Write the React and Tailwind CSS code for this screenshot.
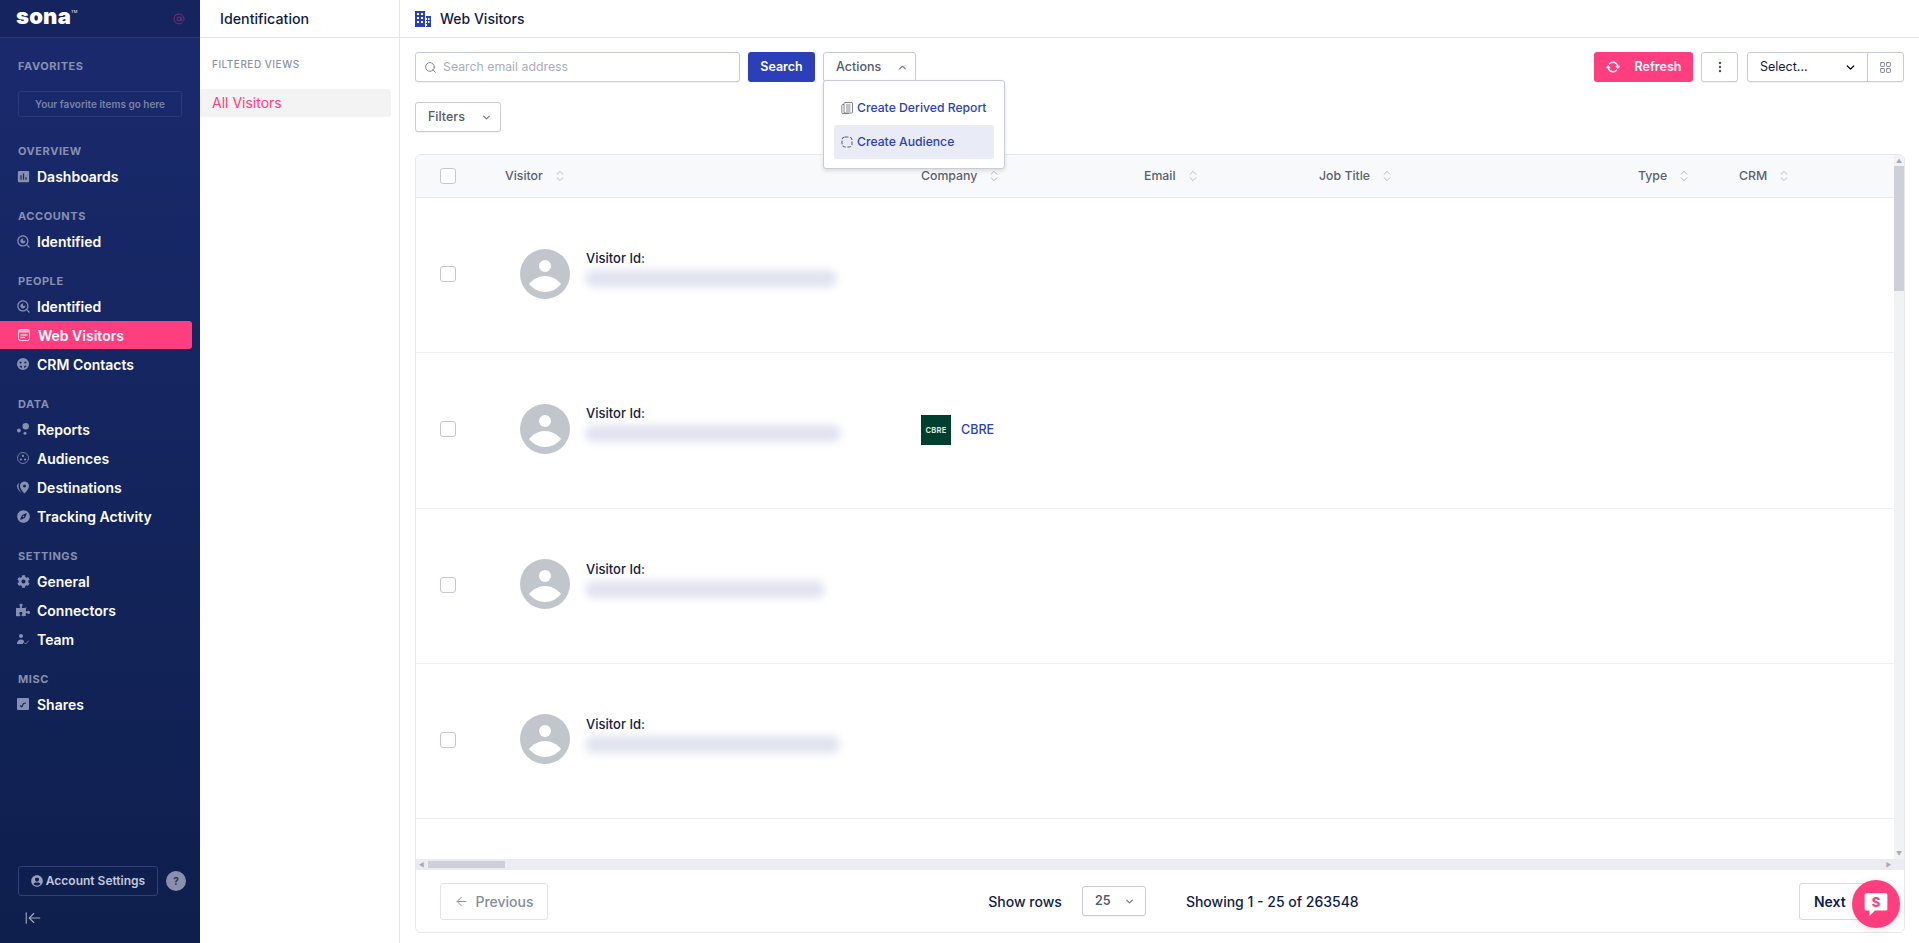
import React from 'react';
import { Search, ChevronDown, ChevronUp, ChevronsUpDown, ArrowLeft, ArrowLeftToLine, LayoutGrid, AtSign, EllipsisVertical } from 'lucide-react';
import { BsArrowRepeat } from 'react-icons/bs';
import { FaCog, FaPuzzlePiece, FaCompass, FaUserCircle } from 'react-icons/fa';
import { MdAssessment } from 'react-icons/md';
import { RiSearchEyeLine } from 'react-icons/ri';

const FONT = { fontFamily: 'Inter, "Noto Sans", sans-serif' };

// sidebar glyphs the packages don't have
const WebIcon = () => (
  <svg viewBox="0 0 12 12" className="w-[12px] h-[12px]">
    <rect x="0.5" y="0.5" width="11" height="11" rx="1.8" fill="#ff3e7f" stroke="#ffd5e4" />
    <rect x="1" y="1" width="10" height="2.6" fill="#ffb3cd" />
    <path d="M2.5 6h7M2.5 8.4h4.5" stroke="#fff" strokeWidth="1" />
  </svg>
);
const CrmIcon = () => (
  <svg viewBox="0 0 12 12" className="w-[12px] h-[12px]" fill="currentColor">
    <path fillRule="evenodd" d="M6 0a6 6 0 1 1 0 12A6 6 0 0 1 6 0ZM3.600 3.400a1.100 1.100 0 1 0 0 2.200 1.100 1.100 0 0 0 0-2.200Zm4.800 0a1.100 1.100 0 1 0 0 2.200 1.100 1.100 0 0 0 0-2.200ZM2.400 7.800c.5 1.300 1.300 2 2.300 2.400l.2-2.200c-.8-.4-1.600-.4-2.500-.2Zm4.700.2.200 2.200c1-.4 1.800-1.100 2.300-2.400-.9-.2-1.700-.2-2.500.2Z" />
  </svg>
);
const ReportsIcon = () => (
  <svg viewBox="0 0 12 12" className="w-[12px] h-[12px]" fill="currentColor">
    <circle cx="8.7" cy="3.3" r="3.2" /><circle cx="1.9" cy="7.500" r="1.900" /><circle cx="8" cy="10.200" r="1.500" />
  </svg>
);
const AudiencesIcon = () => (
  <svg viewBox="0 0 12 12" className="w-[12px] h-[12px]" fill="currentColor">
    <circle cx="6" cy="6" r="5.5" fill="none" stroke="currentColor" strokeWidth="0.8" />
    <circle cx="6" cy="3.9" r="1.1" /><circle cx="3.9" cy="7.5" r="1.1" /><circle cx="8.1" cy="7.5" r="1.1" />
  </svg>
);
const PinIcon = () => (
  <svg viewBox="0 0 12 12" className="w-[13px] h-[13px]" fill="currentColor">
    <path fillRule="evenodd" d="M7.5 0A4.5 4.5 0 0 1 12 4.5C12 7.5 7.5 12 7.5 12S3 7.500 3 4.500A4.5 4.5 0 0 1 7.500 0Zm0 3a1.500 1.500 0 1 0 0 3 1.500 1.500 0 0 0 0-3Z" />
    <path d="M2.600 1.300C1 2.200 0 3.300 0 5c0 2 2.500 5 4.600 7C3.200 9.800 1.500 7.300 1.500 5c0-1.500.4-2.600 1.100-3.700Z" />
  </svg>
);
const TeamIcon = () => (
  <svg viewBox="0 0 12 12" className="w-[12px] h-[12px]" fill="currentColor">
    <circle cx="4" cy="3" r="2" />
    <path d="M0 11c0-3 1.600-4.500 4-4.500S7 7.500 7 9l-1.500 2H0Z" />
    <path d="m7 9.500 1.500 1.500L12 7.500" fill="none" stroke="currentColor" strokeWidth="0.9" />
  </svg>
);
const SharesIcon = () => (
  <svg viewBox="0 0 12 12" className="w-[12px] h-[12px]">
    <rect width="12" height="12" rx="1" fill="currentColor" />
    <path d="m3 7.500 1.800 1.300L6.500 5.500 9 5" fill="none" stroke="#14245c" strokeWidth="1.200" />
  </svg>
);
const BuildingIcon = () => (
  <svg viewBox="0 0 16 16" className="w-[16px] h-[16px] text-[#2b3fb8]" fill="currentColor">
    <path fillRule="evenodd" d="M0 0h10v16H0V0Zm2 2v2h2V2H2Zm4 0v2h2V2H6ZM2 6v2h2V6H2Zm4 0v2h2V6H6Zm-4 4v2h2v-2H2Zm4 0v2h2v-2H6Z" />
    <path fillRule="evenodd" d="M11 5h5v11h-5v-1h1v-2h-1v-1h1v-2h-1V9h1V7h-1V5Zm2 2v2h1.500V7H13Zm0 3v2h1.500v-2H13Z" />
  </svg>
);
const CopyListIcon = () => (
  <svg viewBox="0 0 12 12" className="w-[12px] h-[12px] text-[#5f6675]" fill="none" stroke="currentColor" strokeWidth="0.8">
    <rect x="3" y="0.500" width="8.500" height="10.500" rx="1" />
    <path d="M3 2.500H1.800a1 1 0 0 0-1 1v7a1 1 0 0 0 1 1H8" />
    <path d="M5 3h4.500M5 5h4.500M5 7h4.500M5 9h4.500" />
  </svg>
);
const DashedCircleIcon = () => (
  <svg viewBox="0 0 12 12" className="w-[12px] h-[12px] text-[#5f6675]" fill="none" stroke="currentColor" strokeWidth="1.100">
    <rect x="1" y="1" width="10" height="10" rx="3" strokeDasharray="3.500 1.600" />
  </svg>
);
const Avatar = () => (
  <svg viewBox="0 0 50 50" className="w-[50px] h-[50px] shrink-0">
    <circle cx="25" cy="25" r="25" fill="#c1c5cc" />
    <circle cx="25" cy="17" r="6" fill="#fff" />
    <path d="M9 35c4-5 10-8 16-8s12 3 16 8c-4 5-10 8-16 8S13 40 9 35Z" fill="#fff" />
  </svg>
);

const SECTIONS = [
  { label: 'OVERVIEW', items: [{ name: 'Dashboards', icon: <MdAssessment className="w-[15px] h-[15px] shrink-0 -mx-[2px]" /> }] },
  { label: 'ACCOUNTS', items: [{ name: 'Identified', icon: <RiSearchEyeLine className="w-[15px] h-[15px] shrink-0 -mx-[2px]" /> }] },
  {
    label: 'PEOPLE',
    items: [
      { name: 'Identified', icon: <RiSearchEyeLine className="w-[15px] h-[15px] shrink-0 -mx-[2px]" /> },
      { name: 'Web Visitors', icon: <WebIcon />, active: true },
      { name: 'CRM Contacts', icon: <CrmIcon /> },
    ],
  },
  {
    label: 'DATA',
    items: [
      { name: 'Reports', icon: <ReportsIcon /> },
      { name: 'Audiences', icon: <AudiencesIcon /> },
      { name: 'Destinations', icon: <PinIcon /> },
      { name: 'Tracking Activity', icon: <FaCompass className="w-[13px] h-[13px] shrink-0" /> },
    ],
  },
  {
    label: 'SETTINGS',
    items: [
      { name: 'General', icon: <FaCog className="w-[13px] h-[13px] shrink-0" /> },
      { name: 'Connectors', icon: <FaPuzzlePiece className="w-[14px] h-[14px] shrink-0 -mx-[1px]" /> },
      { name: 'Team', icon: <TeamIcon /> },
    ],
  },
  { label: 'MISC', items: [{ name: 'Shares', icon: <SharesIcon /> }] },
];

function SectionLabel({ children, className = '' }) {
  return <div className={`h-[14px] leading-[14px] pl-[18px] text-[11px] font-bold tracking-[0.05em] text-[#8790b0] ${className}`}>{children}</div>;
}

function NavItem({ name, icon, active }) {
  if (active) {
    return (
      <div className="h-[29px] flex items-center pr-[8px]">
        <div className="w-full h-[28px] flex items-center bg-[#ff3e7f] rounded-r-[3px] pl-[18px] gap-[8px] text-white text-[14px] font-semibold">
          {icon}
          <span>{name}</span>
        </div>
      </div>
    );
  }
  return (
    <div className="h-[29px] flex items-center pl-[17px] gap-[8px] text-white text-[14px] font-semibold">
      <span className="w-[12px] flex justify-center text-[#8790b0]">{icon}</span>
      <span>{name}</span>
    </div>
  );
}

function Sidebar() {
  return (
    <aside className="w-[200px] shrink-0 h-full flex flex-col bg-linear-to-b from-[#1a2a6e] to-[#0e1f4d]">
      <div className="h-[38px] shrink-0 flex items-center justify-between pl-[16px] pr-[15px] bg-[#15235f] border-b border-[#2a3878]">
        <div className="flex items-start text-white text-[22px] font-black leading-none tracking-[0.01em] -mt-[5px]">
          sona<span className="text-[4px] font-normal mt-[5px]">TM</span>
        </div>
        <AtSign className="w-[12px] h-[12px] text-[#7b2d73]" strokeWidth={2} />
      </div>
      <SectionLabel className="mt-[21px]">FAVORITES</SectionLabel>
      <div className="mt-[18px] mx-[18px] h-[26px] flex items-center justify-center rounded-[3px] border border-[#2c3a7a] text-[10px] font-semibold text-[#7881a6]">
        Your favorite items go here
      </div>
      <div className="h-[8.500px]" />
      {SECTIONS.map((s) => (
        <div key={s.label} className="pt-[18.500px]">
          <SectionLabel className="mb-[3.500px]">{s.label}</SectionLabel>
          {s.items.map((it, i) => <NavItem key={i} {...it} />)}
        </div>
      ))}
      <div className="mt-auto pb-[16px]">
        <div className="flex items-center pl-[18px] gap-[8px]">
          <button className="w-[140px] h-[30px] flex items-center justify-center gap-[3px] rounded-[3px] border border-[#333f78] text-[12px] font-semibold text-[#c3c8d8]">
            <FaUserCircle className="w-[12px] h-[12px] text-[#9aa1bb]" />
            Account Settings
          </button>
          <span className="w-[20px] h-[20px] rounded-full bg-[#8a90ab] flex items-center justify-center text-[10px] font-bold text-[#2a3560]">?</span>
        </div>
        <div className="mt-[13px] pl-[24px]">
          <ArrowLeftToLine className="w-[18px] h-[18px] text-[#a2a8bf]" strokeWidth={1.500} />
        </div>
      </div>
    </aside>
  );
}

function FiltersPane() {
  return (
    <div className="w-[200px] shrink-0 h-full flex flex-col border-r border-[#e5e6ea] bg-white">
      <div className="h-[38px] shrink-0 flex items-center pl-[20px] border-b border-[#e5e6ea] text-[14.250px] font-medium text-[#111c43]">Identification</div>
      <div className="mt-[20px] pl-[12px] h-[13px] leading-[13px] text-[10px] font-medium tracking-[0.05em] text-[#8a93a6]">FILTERED VIEWS</div>
      <div className="mt-[18px] mr-[8px] h-[28px] flex items-center pl-[12px] pb-[1px] bg-[#f3f3f3] rounded-r-[3px] text-[14px] text-[#ff3e7f]">All Visitors</div>
    </div>
  );
}

const OUTLINE_BTN = 'h-[30px] flex items-center rounded-[3px] border border-[#c9ccd6] bg-white text-[12.5px] font-medium text-[#555c6b] shadow-[0_1px_1px_rgba(0,0,0,0.05)]';

function Toolbar() {
  return (
    <div className="pt-[14px]">
      <div className="flex items-center pr-[1px]">
        <div className="w-[325px] h-[30px] flex items-center gap-[6px] pl-[8px] rounded-[3px] border border-[#c9ccd6] bg-white shadow-[0_1px_1px_rgba(0,0,0,0.05)]">
          <Search className="w-[13px] h-[13px] text-[#7d8490]" strokeWidth={1.800} />
          <span className="text-[12.300px] text-[#a9aeb8]">Search email address</span>
        </div>
        <button className="ml-[8px] w-[67px] h-[30px] rounded-[3px] bg-[#2b3fb8] text-white text-[12.500px] font-semibold">Search</button>
        <div className="relative ml-[8px]">
          <button className={`${OUTLINE_BTN} w-[93px] pl-[12px] gap-[16px]`}>
            Actions
            <ChevronUp className="w-[11px] h-[11px] text-[#777e8c]" strokeWidth={3} />
          </button>
          <div className="absolute z-10 left-0 top-[28px] w-[182px] h-[89px] rounded-[3px] border border-[#c9ccd6] bg-white shadow-[0_2px_4px_rgba(0,0,0,0.12)] px-[10px] pt-[10px]">
            <div className="h-[34px] flex items-center gap-[4px] pl-[7px] text-[12.200px] font-medium text-[#2b3fb8]"><CopyListIcon />Create Derived Report</div>
            <div className="h-[34px] flex items-center gap-[4px] pl-[7px] rounded-[3px] bg-[#e9ebf7] text-[12.200px] font-medium text-[#2b3fb8]"><DashedCircleIcon />Create Audience</div>
          </div>
        </div>
        <button className="ml-auto w-[99px] h-[30px] flex items-center justify-center gap-[15px] rounded-[3px] bg-[#ff3e7f] text-white text-[12.500px] font-semibold">
          <BsArrowRepeat className="w-[14px] h-[14px]" style={{ stroke: 'currentColor', strokeWidth: 0.6 }} />
          Refresh
        </button>
        <button className={`${OUTLINE_BTN} ml-[8px] w-[37px] justify-center`}>
          <EllipsisVertical className="w-[14px] h-[14px] text-[#4b5261]" strokeWidth={2.200} />
        </button>
        <div className={`${OUTLINE_BTN} ml-[9px] w-[157px]`}>
          <div className="w-[120px] h-full flex items-center justify-between pl-[12px] pr-[10px] border-r border-[#c9ccd6] text-[#111c43] font-normal">
            Select...
            <ChevronDown className="w-[13px] h-[13px] text-black" strokeWidth={2.500} />
          </div>
          <div className="flex-1 flex items-center justify-center">
            <LayoutGrid className="w-[13px] h-[13px] text-[#666d7b]" strokeWidth={1.500} />
          </div>
        </div>
      </div>
      <div className="mt-[20px]">
        <button className={`${OUTLINE_BTN} w-[86px] pl-[12px] gap-[16px]`}>
          Filters
          <ChevronDown className="w-[11px] h-[11px] text-[#777e8c]" strokeWidth={3} />
        </button>
      </div>
    </div>
  );
}

const COLS = 'grid grid-cols-[89px_416px_223px_175px_319px_101px_1fr]';

function HeadCell({ children }) {
  return (
    <div className="flex items-center gap-[10px] text-[12.300px] font-medium text-[#5a6170]">
      {children}
      <ChevronsUpDown className="w-[14px] h-[14px] text-[#a5a9b3]" strokeWidth={1.300} />
    </div>
  );
}

const Check = () => <span className="block w-[16px] h-[16px] rounded-[3px] border border-[#c4c7d0] bg-white" />;

const ROWS = [
  { blur: 252 },
  { blur: 256, company: true },
  { blur: 240 },
  { blur: 255 },
];

function Row({ blur, company }) {
  return (
    <div className={`${COLS} h-[155.250px] border-b border-[#eeeff1] items-center`}>
      <div className="pl-[24px] -mt-[2px]"><Check /></div>
      <div className="flex items-center pl-[15px] -mt-[3px]">
        <Avatar />
        <div className="ml-[12px] -mt-[10px] min-w-0">
          <div className="pl-[4px] text-[13px] font-medium leading-[16px] text-[#111c43]">Visitor Id:</div>
          {/* blurred id */}
          <div className="mt-[4px] ml-[3px] h-[17px] rounded-full bg-[#e0e2ef] blur-[4px]" style={{ width: blur }} />
        </div>
      </div>
      <div>
        {company && (
          <div className="flex items-center gap-[10px]">
            <span className="w-[30px] h-[30px] bg-[#003f2d] flex items-center justify-center text-[7.500px] font-bold tracking-[0.03em] text-[#d7e5dd]">CBRE</span>
            <span className="text-[12.500px] font-medium text-[#2b3fb8]">CBRE</span>
          </div>
        )}
      </div>
    </div>
  );
}

function TableCard() {
  return (
    <div className="mt-[22px] mb-[10px] flex-1 min-h-0 flex flex-col rounded-[6px] border border-[#e7e8ec] overflow-hidden bg-white">
      <div className="flex-1 min-h-0 flex">
        <div className="flex-1 min-w-0 flex flex-col overflow-hidden">
          <div className={`${COLS} h-[43px] shrink-0 items-center bg-[#f8f9fb] border-b border-[#e7e8ec]`}>
            <div className="pl-[24px]"><Check /></div>
            <HeadCell>Visitor</HeadCell>
            <HeadCell>Company</HeadCell>
            <HeadCell>Email</HeadCell>
            <HeadCell>Job Title</HeadCell>
            <HeadCell>Type</HeadCell>
            <HeadCell>CRM</HeadCell>
          </div>
          {ROWS.map((r, i) => <Row key={i} {...r} />)}
        </div>
        {/* vertical scrollbar */}
        <div className="w-[10px] shrink-0 bg-[#f1f2f4] flex flex-col">
          <div className="h-[11px] shrink-0 flex items-center justify-center text-[#a8acb6] text-[6px]">▲</div>
          <div className="h-[125px] shrink-0 bg-[#cdd0d8]" />
          <div className="flex-1" />
          <div className="h-[11px] shrink-0 flex items-center justify-center text-[#a8acb6] text-[6px]">▼</div>
        </div>
      </div>
      {/* horizontal scrollbar */}
      <div className="h-[11px] shrink-0 bg-[#ebecf0] flex items-center">
        <span className="w-[11px] text-center text-[6px] text-[#a8acb6]">◀</span>
        <span className="w-[77px] h-[7px] ml-[1px] bg-[#cdd0d8]" />
        <span className="ml-auto w-[11px] mr-[10px] text-center text-[6px] text-[#a8acb6]">▶</span>
      </div>
      <div className="h-[62px] shrink-0 flex items-center justify-between pl-[24px] pr-[20px]">
        <button className="w-[108px] h-[37px] flex items-center justify-center gap-[6px] rounded-[3px] border border-[#e4e5ea] text-[14px] font-medium text-[#868c9b]">
          <ArrowLeft className="w-[15px] h-[15px]" strokeWidth={1.500} />
          Previous
        </button>
        <div className="flex items-center text-[14px] font-medium text-[#111c43]">
          <span>Show rows</span>
          <div className={`${OUTLINE_BTN} ml-[20px] w-[64px] pl-[12px] pr-[10px] justify-between text-[#111c43] font-semibold`}>
            25
            <ChevronDown className="w-[11px] h-[11px] text-[#777e8c]" strokeWidth={3} />
          </div>
          <span className="ml-[40px]">Showing 1 - 25 of 263548</span>
        </div>
        <button className="w-[85px] h-[37px] flex items-center pl-[14px] rounded-[3px] border border-[#d8dae2] text-[14px] font-semibold text-[#111c43]">Next</button>
      </div>
    </div>
  );
}

function ChatBubble() {
  return (
    <div className="absolute right-[19px] bottom-[15px] w-[48px] h-[48px] rounded-full bg-[#ff3e7f] flex items-center justify-center shadow-[0_2px_10px_rgba(0,0,0,0.12)]">
      <svg viewBox="0 0 24 24" className="w-[26px] h-[26px]">
        <path d="M3 2h18a1.500 1.500 0 0 1 1.500 1.500v13A1.500 1.500 0 0 1 21 18H11l-5 5v-5H3a1.500 1.500 0 0 1-1.500-1.500v-13A1.500 1.500 0 0 1 3 2Z" fill="#fff" />
        <text x="12" y="14.500" textAnchor="middle" fontSize="12" fontWeight="800" fill="#ff3e7f" fontFamily="Inter, sans-serif">S</text>
      </svg>
    </div>
  );
}

export default function App() {
  return (
    <div className="relative h-screen w-full flex overflow-hidden bg-white" style={FONT}>
      <Sidebar />
      <FiltersPane />
      <main className="flex-1 min-w-0 h-full flex flex-col">
        <div className="h-[38px] shrink-0 flex items-center gap-[9px] pl-[15px] border-b border-[#e5e6ea] text-[14px] font-medium text-[#111c43]">
          <BuildingIcon />
          Web Visitors
        </div>
        <div className="flex-1 min-h-0 flex flex-col pl-[15px] pr-[14px]">
          <Toolbar />
          <TableCard />
        </div>
      </main>
      <ChatBubble />
    </div>
  );
}
